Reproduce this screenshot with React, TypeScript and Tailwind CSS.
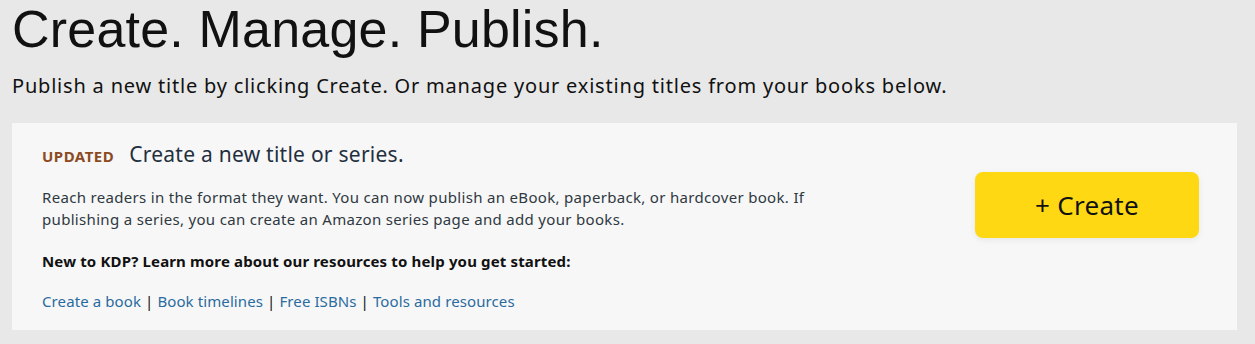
export default function App() {
  return (
    <div className="min-h-[344px] w-full bg-[#e8e8e8] pl-3 pr-[18px] pt-px pb-[14px]">
      <h1 className="font-['Liberation_Sans',Arial,sans-serif] text-[52px] leading-[56px] tracking-[0.2px] text-[#111]">
        Create. Manage. Publish.
      </h1>
      <p className="mt-[15px] font-['Noto_Sans',sans-serif] text-[20px] leading-[28px] tracking-[0.8px] text-[#111]">
        Publish a new title by clicking Create. Or manage your existing titles from your books below.
      </p>
      <div className="mt-[23px] flex items-start justify-between bg-[#f7f7f7] pl-[30px] pr-[38px] pt-[17px] pb-[18px] font-['Noto_Sans',sans-serif] text-[#2f3942]">
        <div className="flex flex-col">
          <div className="flex items-baseline gap-[15px]">
            <span className="text-[15px] font-bold uppercase tracking-[0.5px] text-[#8c4a1f]">Updated</span>
            <span className="text-[21px] leading-[28px] tracking-[0.25px] text-[#232f3e]">Create a new title or series.</span>
          </div>
          <p className="mt-[18px] w-[775px] text-[15px] leading-[22px] tracking-[0.32px]">
            Reach readers in the format they want. You can now publish an eBook, paperback, or hardcover book. If
            publishing a series, you can create an Amazon series page and add your books.
          </p>
          <p className="mt-[20px] text-[15px] font-bold leading-[22px] tracking-[0.15px] text-[#111]">
            New to KDP? Learn more about our resources to help you get started:
          </p>
          <div className="mt-[18px] text-[15px] leading-[22px] tracking-[0.1px] text-[#111]">
            <a className="text-[#2a6b9f]">Create a book</a> | <a className="text-[#2a6b9f]">Book timelines</a> |{" "}
            <a className="text-[#2a6b9f]">Free ISBNs</a> | <a className="text-[#2a6b9f]">Tools and resources</a>
          </div>
        </div>
        <button className="mt-[32px] h-[66px] w-[224px] shrink-0 rounded-[8px] bg-[#ffd814] text-[26px] tracking-[0.3px] text-[#111] shadow-[0_2px_5px_rgba(213,217,217,0.5)]">
          + Create
        </button>
      </div>
    </div>
  );
}
